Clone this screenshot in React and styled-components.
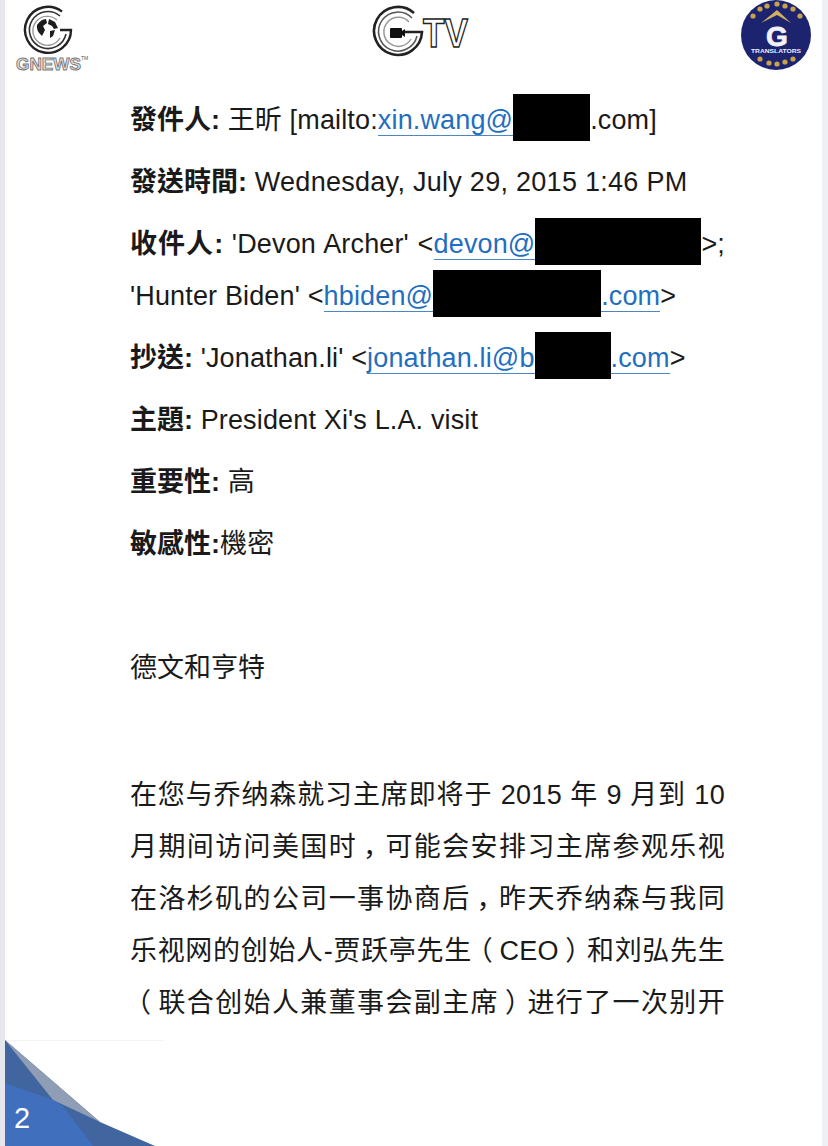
import styled, { createGlobalStyle } from 'styled-components';

const GlobalStyle = createGlobalStyle`
	html, body {
		margin: 0;
		padding: 0;
		background: #fff;
	}
`;

const Page = styled.div`
	position: relative;
	box-sizing: border-box;
	width: 828px;
	height: 1146px;
	overflow: hidden;
	background: #fff;
	border-left: 5px solid #e6e6ee;
	border-right: 6px solid #eff0f5;
	font-family: "Liberation Sans", "Noto Sans CJK TC", sans-serif;
	color: #1a1a1a;
`;
const Header = styled.header`
	display: flex;
	justify-content: space-between;
	align-items: flex-start;
	height: 76px;
	padding: 0 10px 0 10px;
`;
const Logo = styled.svg`
	display: block;
	flex: none;
`;
const Letter = styled.div`
	box-sizing: border-box;
	padding: 18px 97px 0 125px;
	font-size: 27px;
	line-height: 52px;
`;
const Para = styled.p`
	margin: 0 0 10px;
	text-align: justify;
	text-align-last: ${(p) => (p.$fill ? 'justify' : 'left')};
	letter-spacing: ${(p) => p.$track ?? 0.15}px;
	font-family: ${(p) => (p.$sc ? '"Liberation Sans", "Noto Sans CJK SC", sans-serif' : 'inherit')};
`;
const Blank = styled.div`
	height: ${(p) => p.$h}px;
`;
const Label = styled.b`
	font-weight: 700;
	letter-spacing: 0;
`;
const Mail = styled.a`
	color: #1f6fc0;
	border-bottom: 1.5px solid #4a86c8;
`;
const Redact = styled.span`
	display: inline-block;
	width: ${(p) => p.$w}px;
	height: 47px;
	margin-bottom: -12px;
	background: #000;
`;
// the source font centres its full-width punctuation in the em box
const Punct = styled.span`
	margin-left: ${(p) => (p.$open ? '-6px' : '6px')};
	margin-right: ${(p) => (p.$open ? '6px' : '-6px')};
`;
const Corner = styled.div`
	position: absolute;
	left: 0;
	bottom: 0;
	width: 160px;
	height: 106px;
`;
const CornerRule = styled.div`
	position: absolute;
	left: 0;
	top: 0;
	width: 158px;
	height: 1px;
	background: #f3f3f5;
`;
const CornerArt = styled.svg`
	position: absolute;
	left: 0;
	bottom: 0;
`;
const PageNumber = styled.span`
	position: absolute;
	left: 9px;
	bottom: 15px;
	font-size: 29px;
	line-height: 26px;
	color: #fff;
`;

function GNewsLogo() {
	return (
		<Logo width="90" height="74" viewBox="15 0 90 74">
			<g fill="none">
				<path d="M62 11.6 A23 23 0 1 0 71 30 L60 30" stroke="#222" strokeWidth="2.4" />
				<path d="M60 16 A18.5 18.5 0 1 0 66 34" stroke="#333" strokeWidth="1.6" />
				<path d="M57 20 A14.5 14.5 0 1 0 60 38" stroke="#999" strokeWidth="1.4" />
			</g>
			<circle cx="47" cy="29" r="12" fill="#fff" />
			<path d="M37 25 q4-6 9-6 l1 4 -4 3 2 4 -3 6 q-6-5-5-11z M49 19 l6 3 3 6 -4 1 -2-3 -4-2z M50 31 l5-1 -2 6 -3 2z" fill="#1c1c1c" />
			<text x="16" y="70" fontFamily="Liberation Sans" fontWeight="700" fontSize="17" fill="#e4e4e4" stroke="#777" strokeWidth="0.9" textLength="65" lengthAdjust="spacingAndGlyphs">GNEWS</text>
			<text x="81" y="60" fontFamily="Liberation Sans" fontSize="5" fill="#555">TM</text>
		</Logo>
	);
}

function GtvLogo() {
	return (
		<Logo width="106" height="62" viewBox="370 0 106 62">
			<g fill="none">
				<path d="M414 13 A24 24 0 1 0 422 32 L405 32" stroke="#222" strokeWidth="2.6" />
				<path d="M412 18 A19.5 19.5 0 1 0 417 36" stroke="#555" strokeWidth="1.5" />
				<path d="M409 22 A14.5 14.5 0 1 0 411 39" stroke="#999" strokeWidth="1.5" />
			</g>
			<rect x="390" y="28" width="12" height="10" rx="1" fill="#111" />
			<path d="M402 31 l3-2 v8 l-3-2z" fill="#111" />
			<text x="423" y="47" fontFamily="Liberation Sans" fontWeight="700" fontSize="40" fill="#fff" stroke="#222" strokeWidth="1.4" textLength="45" lengthAdjust="spacingAndGlyphs">TV</text>
		</Logo>
	);
}

function TranslatorsLogo() {
	const stars = [
		[753, 16], [760, 9], [767, 6], [777, 4], [785, 6], [793, 9], [800, 16],
		[760, 59], [769, 63], [777, 64], [785, 62], [793, 59]
	];
	return (
		<Logo width="71" height="72" viewBox="741 0 71 72">
			<circle cx="776" cy="35" r="35" fill="#1c2470" />
			{stars.map(([x, y]) => (
				<circle key={x + '-' + y} cx={x} cy={y} r="2.6" fill="#c9a24a" />
			))}
			<path d="M761 23 L777 10 L791 23 L777 15z" fill="#d2ae62" />
			<text x="777" y="46" textAnchor="middle" fontFamily="Liberation Sans" fontWeight="700" fontSize="28" fill="#f1f1f6" stroke="#f1f1f6" strokeWidth="0.8">G</text>
			<text x="776" y="53" textAnchor="middle" fontFamily="Liberation Sans" fontWeight="700" fontSize="6" fill="#eef" textLength="50" lengthAdjust="spacingAndGlyphs">TRANSLATORS</text>
		</Logo>
	);
}

function App() {
	return (
		<Page>
			<GlobalStyle />
			<Header>
				<GNewsLogo />
				<GtvLogo />
				<TranslatorsLogo />
			</Header>
			<Letter>
				<Para><Label>發件人:</Label> 王昕 [mailto:<Mail>xin.wang@</Mail><Redact $w={77} />.com]</Para>
				<Para $track={0.28}><Label>發送時間:</Label> Wednesday, July 29, 2015 1:46 PM</Para>
				<Para>
					<Label>收件人:</Label> 'Devon Archer' &lt;<Mail>devon@</Mail><Redact $w={166} />&gt;; 'Hunter Biden' &lt;<Mail>hbiden@</Mail><Redact $w={168} /><Mail>.com</Mail>&gt;
				</Para>
				<Para><Label>抄送:</Label> 'Jonathan.li' &lt;<Mail>jonathan.li@b</Mail><Redact $w={76} /><Mail>.com</Mail>&gt;</Para>
				<Para><Label>主題:</Label> President Xi's L.A. visit</Para>
				<Para><Label>重要性:</Label> 高</Para>
				<Para><Label>敏感性:</Label>機密</Para>
				<Blank $h={62} />
				<Para $sc $track={0}>德文和亨特</Para>
				<Blank $h={65} />
				<Para $sc $fill $track={0.3}>
					在您与乔纳森就习主席即将于 2015 年 9 月到 10 月期间访问美国时<Punct>，</Punct>可能会安排习主席参观乐视在洛杉矶的公司一事协商后<Punct>，</Punct>昨天乔纳森与我同乐视网的创始人-贾跃亭先生<Punct $open>（</Punct>CEO<Punct>）</Punct>和刘弘先生<Punct $open>（</Punct>联合创始人兼董事会副主席<Punct>）</Punct>进行了一次别开
				</Para>
			</Letter>
			<Corner>
				<CornerRule />
				<CornerArt width="155" height="106" viewBox="0 0 155 106">
					<polygon points="0,0 95,82 150,106 0,106" fill="#41659f" />
					<polygon points="0,0 95,82 48,60" fill="#8f9db5" />
					<polygon points="0,43 48,60 58,66 88,106 0,106" fill="#3f6fbd" />
				</CornerArt>
				<PageNumber>2</PageNumber>
			</Corner>
		</Page>
	);
}
export default App;
